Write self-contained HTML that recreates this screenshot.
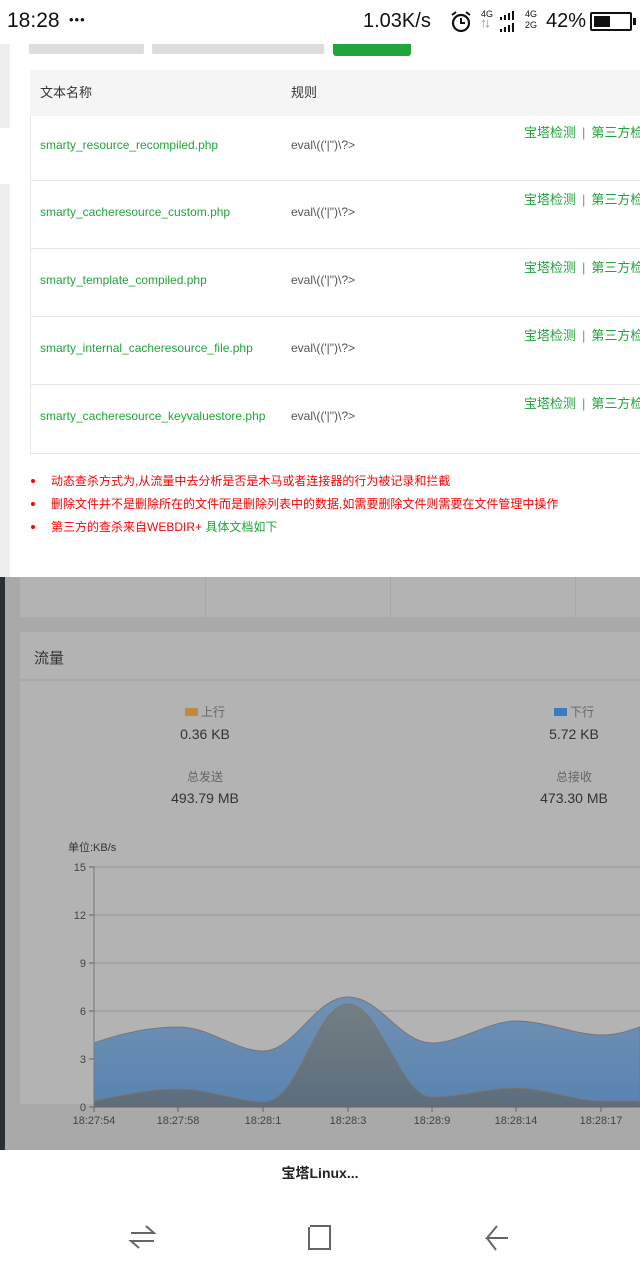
<!DOCTYPE html>
<html><head><meta charset="utf-8">
<style>
*{margin:0;padding:0;box-sizing:border-box}
body{width:640px;height:1280px;position:relative;overflow:hidden;background:#a9a9a9;font-family:"Liberation Sans","Noto Sans CJK SC",sans-serif}
.abs{position:absolute}
.status{left:0;top:0;width:640px;height:44px;background:#fff;color:#111;z-index:5}
.modal{left:10px;top:44px;width:630px;height:533px;background:#fff;z-index:3}
.row{position:absolute;left:20px;width:610px;height:68px;border-bottom:1px solid #e8e8e8;font-size:12px}
.row .n{position:absolute;left:10px;top:24px;color:#20a53a}
.row .r{position:absolute;left:261px;top:24px;color:#555}
.row .a{position:absolute;left:494px;top:8px;color:#20a53a;font-size:13px;white-space:nowrap}
.row .a span{color:#888;margin:0 6px}
.note{position:absolute;left:41px;font-size:12px;color:#f00}
.note:before{content:"";position:absolute;left:-20px;top:7px;width:4px;height:4px;border-radius:50%;background:#f00}
</style></head><body>
<div class="abs status">
 <div class="abs" style="left:7px;top:9px;font-size:21px">18:28</div>
 <div class="abs" style="left:69px;top:12px;font-size:13px;letter-spacing:1px">•••</div>
 <div class="abs" style="left:363px;top:10px;font-size:20px">1.03K/s</div>
 <svg class="abs" style="left:449px;top:10px" width="24" height="24" viewBox="0 0 24 24"><circle cx="12" cy="13" r="8" fill="none" stroke="#111" stroke-width="2.2"/><path d="M12 8v5h4M3 5l4-3M21 5l-4-3" stroke="#111" stroke-width="2" fill="none"/></svg>
 <div class="abs" style="left:481px;top:9px;font-size:9px;line-height:10px">4G<br><span style="color:#999">⇅</span></div>
 <svg class="abs" style="left:499px;top:10px" width="26" height="22"><g fill="#111"><rect x="1" y="7" width="2" height="3"/><rect x="5" y="5" width="2" height="5"/><rect x="9" y="3" width="2" height="7"/><rect x="13" y="1" width="2" height="9"/><rect x="1" y="19" width="2" height="3"/><rect x="5" y="17" width="2" height="5"/><rect x="9" y="15" width="2" height="7"/><rect x="13" y="13" width="2" height="9"/></g></svg>
 <div class="abs" style="left:525px;top:9px;font-size:9px;line-height:11px">4G<br>2G</div>
 <div class="abs" style="left:546px;top:10px;font-size:20px">42%</div>
 <div class="abs" style="left:590px;top:12px;width:42px;height:19px;border:2px solid #111;border-radius:2px"><div style="margin:2px;width:16px;height:11px;background:#111"></div></div>
 <div class="abs" style="left:633px;top:18px;width:3px;height:7px;background:#111"></div>
</div>
<div class="abs" style="left:0;top:44px;width:10px;height:533px;background:#eee"></div>
<div class="abs" style="left:0;top:128px;width:10px;height:56px;background:#fff"></div>
<div class="abs modal">
 <div class="abs" style="left:19px;top:0;width:115px;height:10px;background:#ddd;border-radius:0 0 2px 2px"></div>
 <div class="abs" style="left:142px;top:0;width:172px;height:10px;background:#ddd;border-radius:0 0 2px 2px"></div>
 <div class="abs" style="left:323px;top:0;width:78px;height:12px;background:#20a53a;border-radius:0 0 3px 3px"></div>
 <div class="abs" style="left:20px;top:26px;width:610px;height:384px;border:1px solid #e8e8e8;border-right:none"></div>
 <div class="abs" style="left:20px;top:26px;width:610px;height:46px;background:#f5f5f5;font-size:13px;color:#333">
  <span class="abs" style="left:10px;top:12px">文本名称</span><span class="abs" style="left:261px;top:12px">规则</span></div>
 <div class="row" style="top:72px;height:65px"><span class="n" style="top:22px">smarty_resource_recompiled.php</span><span class="r" style="top:22px">eval\(('|")\?&gt;</span><span class="a" style="top:6px">宝塔检测<span>|</span>第三方检测</span></div>
 <div class="row" style="top:137px"><span class="n">smarty_cacheresource_custom.php</span><span class="r">eval\(('|")\?&gt;</span><span class="a">宝塔检测<span>|</span>第三方检测</span></div>
 <div class="row" style="top:205px"><span class="n">smarty_template_compiled.php</span><span class="r">eval\(('|")\?&gt;</span><span class="a">宝塔检测<span>|</span>第三方检测</span></div>
 <div class="row" style="top:273px"><span class="n">smarty_internal_cacheresource_file.php</span><span class="r">eval\(('|")\?&gt;</span><span class="a">宝塔检测<span>|</span>第三方检测</span></div>
 <div class="row" style="top:341px;border-bottom:none"><span class="n">smarty_cacheresource_keyvaluestore.php</span><span class="r">eval\(('|")\?&gt;</span><span class="a">宝塔检测<span>|</span>第三方检测</span></div>
 <div class="note" style="top:428px">动态查杀方式为,从流量中去分析是否是木马或者连接器的行为被记录和拦截</div>
 <div class="note" style="top:451px">删除文件并不是删除所在的文件而是删除列表中的数据,如需要删除文件则需要在文件管理中操作</div>
 <div class="note" style="top:474px">第三方的查杀来自WEBDIR+ <span style="color:#20a53a">具体文档如下</span></div>
</div>
<div class="abs" style="left:0;top:577px;width:5px;height:573px;background:#2a2f36"></div>
<div class="abs" style="left:20px;top:577px;width:620px;height:40px;background:#b3b3b3"></div>
<div class="abs" style="left:205px;top:577px;width:1px;height:40px;background:#a5a5ac"></div>
<div class="abs" style="left:390px;top:577px;width:1px;height:40px;background:#a5a5ac"></div>
<div class="abs" style="left:575px;top:577px;width:1px;height:40px;background:#a5a5ac"></div>
<div class="abs" style="left:20px;top:632px;width:620px;height:472px;background:#b3b3b3"></div>
<div class="abs" style="left:20px;top:679px;width:620px;height:2px;background:#aaa"></div>
<div class="abs" style="left:34px;top:647px;font-size:15px;color:#333">流量</div>
<div class="abs" style="left:185px;top:708px;width:13px;height:8px;background:#c08a38"></div>
<div class="abs" style="left:201px;top:703px;font-size:12px;color:#666">上行</div>
<div class="abs" style="left:150px;top:726px;width:110px;text-align:center;font-size:14px;color:#333">0.36 KB</div>
<div class="abs" style="left:150px;top:768px;width:110px;text-align:center;font-size:12px;color:#666">总发送</div>
<div class="abs" style="left:150px;top:790px;width:110px;text-align:center;font-size:14px;color:#333">493.79 MB</div>
<div class="abs" style="left:554px;top:708px;width:13px;height:8px;background:#3d7ac0"></div>
<div class="abs" style="left:570px;top:703px;font-size:12px;color:#666">下行</div>
<div class="abs" style="left:519px;top:726px;width:110px;text-align:center;font-size:14px;color:#333">5.72 KB</div>
<div class="abs" style="left:519px;top:768px;width:110px;text-align:center;font-size:12px;color:#666">总接收</div>
<div class="abs" style="left:519px;top:790px;width:110px;text-align:center;font-size:14px;color:#333">473.30 MB</div>
<div class="abs" style="left:68px;top:839px;font-size:11px;color:#333">单位:KB/s</div>
<svg class="abs" style="left:0;top:850px" width="640" height="300">
 <defs><linearGradient id="b" x1="0" y1="0" x2="0" y2="1"><stop offset="0" stop-color="#7191b3"/><stop offset="1" stop-color="#5884b2"/></linearGradient>
 <linearGradient id="g" x1="0" y1="0" x2="0" y2="1"><stop offset="0" stop-color="#727f82"/><stop offset="1" stop-color="#5d6d7d"/></linearGradient></defs>
 <g stroke="#949494" stroke-width="1">
  <line x1="94" y1="17" x2="640" y2="17"/><line x1="94" y1="65" x2="640" y2="65"/><line x1="94" y1="113" x2="640" y2="113"/><line x1="94" y1="161" x2="640" y2="161"/><line x1="94" y1="209" x2="640" y2="209"/>
 </g>
 <path d="M94 193 C122 183,150 177,178 177 C210 177,235 201,263 201 C295 201,315 147,348 147 C380 147,400 193,432 193 C460 193,488 171,516 171 C545 171,575 185,601 185 C620 185,630 180,640 177 L640 257 L94 257Z" fill="url(#b)" stroke="#777" stroke-width="1"/>
 <path d="M94 251 C122 245,150 239,178 239 C210 239,240 252,263 252 C300 252,315 154,348 154 C380 154,400 247,432 247 C460 247,488 238,516 238 C545 238,575 251,601 251 L640 251 L640 257 L94 257Z" fill="url(#g)" stroke="#777" stroke-width="1"/>
 <line x1="94" y1="17" x2="94" y2="257" stroke="#777"/>
 <line x1="94" y1="257" x2="640" y2="257" stroke="#666"/>
 <g stroke="#666"><line x1="89" y1="17" x2="94" y2="17"/><line x1="89" y1="65" x2="94" y2="65"/><line x1="89" y1="113" x2="94" y2="113"/><line x1="89" y1="161" x2="94" y2="161"/><line x1="89" y1="209" x2="94" y2="209"/><line x1="89" y1="257" x2="94" y2="257"/>
 <line x1="94" y1="257" x2="94" y2="262"/><line x1="178" y1="257" x2="178" y2="262"/><line x1="263" y1="257" x2="263" y2="262"/><line x1="348" y1="257" x2="348" y2="262"/><line x1="432" y1="257" x2="432" y2="262"/><line x1="516" y1="257" x2="516" y2="262"/><line x1="601" y1="257" x2="601" y2="262"/></g>
 <g font-size="11" fill="#444" text-anchor="end" font-family="Liberation Sans,sans-serif"><text x="86" y="21">15</text><text x="86" y="69">12</text><text x="86" y="117">9</text><text x="86" y="165">6</text><text x="86" y="213">3</text><text x="86" y="261">0</text></g>
 <g font-size="11" fill="#444" text-anchor="middle" font-family="Liberation Sans,sans-serif"><text x="94" y="274">18:27:54</text><text x="178" y="274">18:27:58</text><text x="263" y="274">18:28:1</text><text x="348" y="274">18:28:3</text><text x="432" y="274">18:28:9</text><text x="516" y="274">18:28:14</text><text x="601" y="274">18:28:17</text></g>
</svg>
<div class="abs" style="left:0;top:1150px;width:640px;height:130px;background:#fff"></div>
<div class="abs" style="left:0;top:1163px;width:640px;text-align:center;font-size:14px;font-weight:bold;color:#222">宝塔Linux...</div>
<svg class="abs" style="left:0;top:1215px" width="640" height="50" fill="none" stroke="#666" stroke-width="2">
 <path d="M131 18H154L146 11M154 26H131L139 33"/>
 <path d="M309 12V34H330V11H310"/>
 <path d="M508 23H487L497 11M487 23L496 35"/>
</svg>
</body></html>
